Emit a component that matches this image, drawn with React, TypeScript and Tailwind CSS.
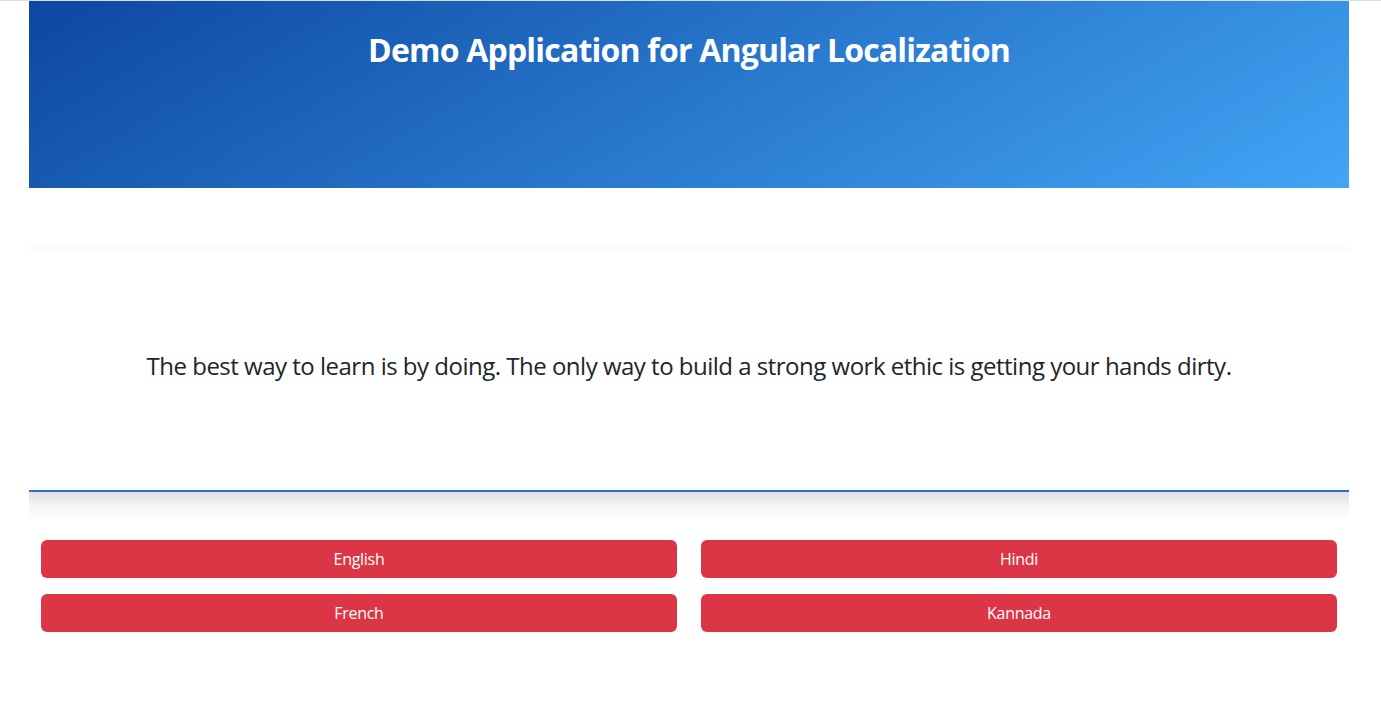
import React from "react";

export default function App() {
  return (
    <div className="min-h-[714px] bg-white font-['Open_Sans',sans-serif]">
      <div className="h-px w-full bg-[#dcdcdc]" />
      <div className="ml-[29px] w-[1320px]">
        <header className="h-[187px] bg-[linear-gradient(150deg,#0d47a1,#42a5f5)] pt-[29px] text-center">
          <h1 className="text-[32px] font-bold leading-[40px] tracking-[-0.8px] text-white">
            Demo Application for Angular Localization
          </h1>
        </header>
        <div className="mt-[54px] h-[9px] bg-[linear-gradient(to_bottom,rgba(0,0,0,0),rgba(0,0,0,0.025))]" />
        <div className="flex h-[239px] items-center justify-center bg-white pb-[9px]">
          <p className="text-[24px] leading-[32px] tracking-[-0.5px] text-[#212529]">
            The best way to learn is by doing. The only way to build a strong work ethic is getting your hands dirty.
          </p>
        </div>
        <div className="h-[2px] bg-[#2a6fdb]" />
        <div className="h-[29px] bg-[linear-gradient(to_bottom,rgba(0,0,0,0.12),rgba(0,0,0,0.04)_50%,rgba(0,0,0,0))]" />
        <div className="mt-[19px] grid grid-cols-2 gap-x-[24px] gap-y-[16px] px-[12px]">
          {["English", "Hindi", "French", "Kannada"].map((l) => (
            <button
              key={l}
              className="h-[38px] rounded-[6px] bg-[#dc3545] text-[16px] tracking-[-0.3px] text-white"
            >
              {l}
            </button>
          ))}
        </div>
      </div>
    </div>
  );
}
